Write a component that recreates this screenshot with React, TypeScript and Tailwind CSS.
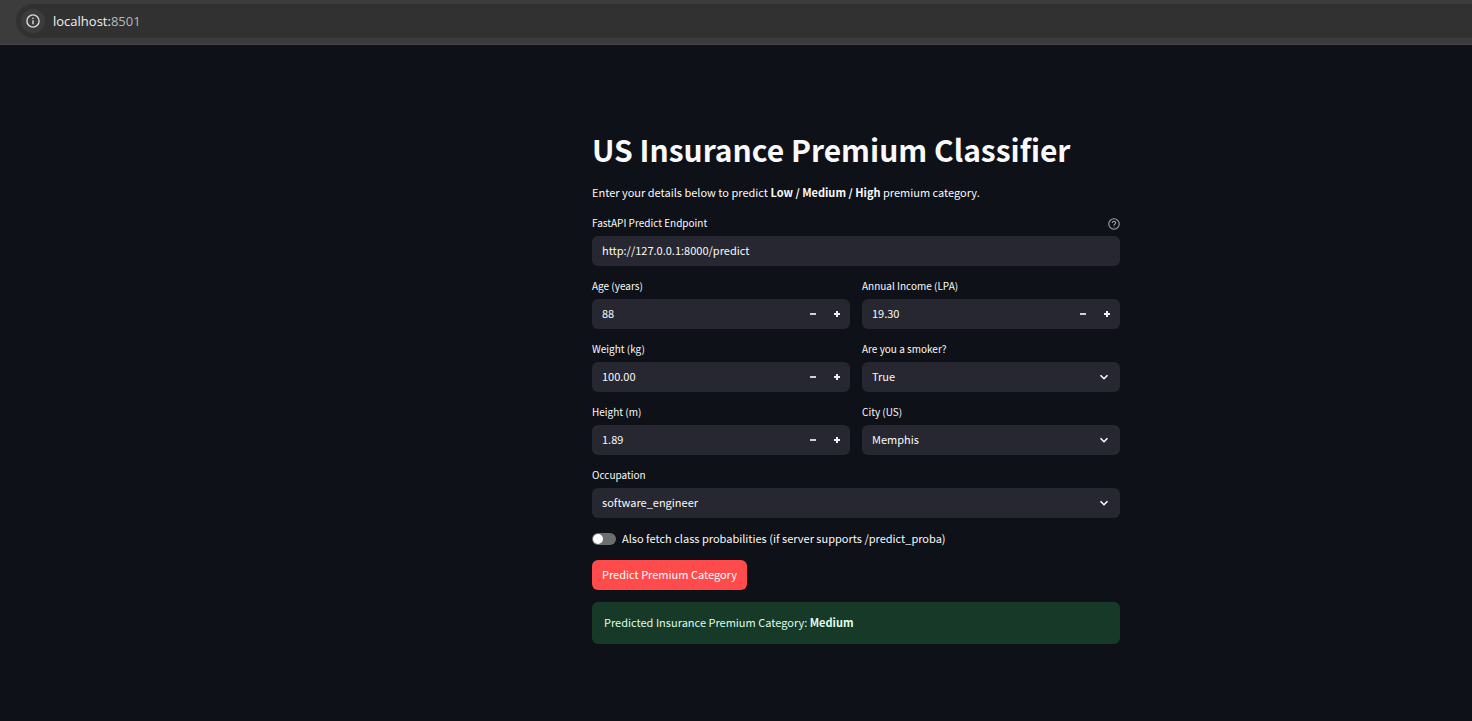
import { useState } from "react";
import type { ReactNode } from "react";

const fieldClass =
  "block h-[30px] w-full min-w-0 bg-transparent px-2.5 pb-0.5 text-[11px] leading-4 text-[#fafafa] outline-none";

function Field({
  id,
  label,
  help,
  children,
}: {
  id: string;
  label: string;
  help?: ReactNode;
  children: ReactNode;
}) {
  return (
    <div>
      <div className="flex h-[21px] items-start justify-between">
        <label htmlFor={id} className="text-[10px] leading-4 text-[#fafafa]">
          {label}
        </label>
        {help}
      </div>
      <div className="flex h-[30px] items-center overflow-hidden rounded-md bg-[#262730]">{children}</div>
    </div>
  );
}

function NumberField({ id, label, initial, step }: { id: string; label: string; initial: string; step: number }) {
  const [value, setValue] = useState(initial);
  const decimals = (initial.split(".")[1] ?? "").length;
  const change = (direction: number) => setValue((Number(value) + direction * step).toFixed(decimals));

  return (
    <Field id={id} label={label}>
      <input
        id={id}
        type="text"
        inputMode="decimal"
        value={value}
        onChange={(event) => setValue(event.target.value)}
        className={fieldClass}
      />
      <button
        type="button"
        aria-label={`Decrease ${label}`}
        onClick={() => change(-1)}
        className="flex h-[30px] w-6 shrink-0 items-center justify-center text-[#d2d2d4]"
      >
        <svg viewBox="0 0 12 12" className="size-3" fill="currentColor" shapeRendering="crispEdges" aria-hidden="true">
          <path d="M3 5h6v2H3z" />
        </svg>
      </button>
      <button
        type="button"
        aria-label={`Increase ${label}`}
        onClick={() => change(1)}
        className="mr-px flex h-[30px] w-6 shrink-0 items-center justify-center text-[#eeeeef]"
      >
        <svg viewBox="0 0 12 12" className="size-3" fill="currentColor" shapeRendering="crispEdges" aria-hidden="true">
          <path d="M5 3h2v2h2v2H7v2H5V7H3V5h2z" />
        </svg>
      </button>
    </Field>
  );
}

function SelectField({ id, label, options }: { id: string; label: string; options: string[] }) {
  return (
    <Field id={id} label={label}>
      <div className="relative w-full">
        <select id={id} className={`${fieldClass} appearance-none`}>
          {options.map((option) => (
            <option key={option} className="bg-[#262730]">
              {option}
            </option>
          ))}
        </select>
        <svg
          viewBox="0 0 12 12"
          className="pointer-events-none absolute top-[9px] right-2.5 size-3 text-[#fafafa]"
          fill="none"
          stroke="currentColor"
          strokeWidth="1.6"
          aria-hidden="true"
        >
          <path d="M2.5 4.2 6 7.7l3.5-3.5" />
        </svg>
      </div>
    </Field>
  );
}

function AddressBar() {
  return (
    <header className="h-[45px] border-b border-[#484848] bg-[#3c3c3c] pt-1 pl-4 font-['Open_Sans','Noto_Sans',sans-serif]">
      <div className="flex h-[34px] items-center rounded-l-full bg-[#313131] pl-[5px]">
        <button
          type="button"
          aria-label="View site information"
          className="flex size-6 items-center justify-center rounded-full bg-[#3c3c3c] text-[#dcdcdc]"
        >
          <svg viewBox="0 0 14 14" className="size-3.5" fill="none" stroke="currentColor" strokeWidth="1.4" aria-hidden="true">
            <circle cx="7" cy="7" r="6.1" />
            <path d="M7 6.3v3.9M7 3.7v1.4" />
          </svg>
        </button>
        <p className="ml-2 text-[13px] leading-5 text-[#f0f0f0]">
          localhost:<span className="text-[#b8b8b8]">8501</span>
        </p>
      </div>
    </header>
  );
}

export default function App() {
  return (
    <div className="min-h-screen bg-[#0e1117] text-[#fafafa]">
      <AddressBar />
      <main className="px-6 pt-[82px] pb-16 font-['Noto_Sans_CJK_SC',sans-serif] lg:pl-[264px]">
        <form className="mx-auto flex max-w-[528px] flex-col gap-3" onSubmit={(event) => event.preventDefault()}>
          <h1 className="py-1 text-[30px] leading-[36px] font-bold">US Insurance Premium Classifier</h1>
          <p className="pb-0.5 text-[11px] leading-[18px]">
            Enter your details below to predict <strong>Low / Medium / High</strong> premium category.
          </p>

          <Field
            id="endpoint"
            label="FastAPI Predict Endpoint"
            help={
              <button type="button" aria-label="Endpoint help" className="pt-[3px] text-[#a3a4a8]">
                <svg viewBox="0 0 24 24" className="size-3" fill="none" stroke="currentColor" strokeWidth="2.2" strokeLinecap="round" strokeLinejoin="round" aria-hidden="true">
                  <circle cx="12" cy="12" r="10.5" />
                  <path d="M8.6 9a3.5 3.5 0 0 1 6.8 1c0 2.2-3.4 2.6-3.4 4.2M12 18h.01" />
                </svg>
              </button>
            }
          >
            <input id="endpoint" type="text" defaultValue="http://127.0.0.1:8000/predict" className={fieldClass} />
          </Field>

          <div className="grid gap-3 sm:grid-cols-2">
            <NumberField id="age" label="Age (years)" initial="88" step={1} />
            <NumberField id="income" label="Annual Income (LPA)" initial="19.30" step={0.1} />
            <NumberField id="weight" label="Weight (kg)" initial="100.00" step={0.5} />
            <SelectField id="smoker" label="Are you a smoker?" options={["True", "False"]} />
            <NumberField id="height" label="Height (m)" initial="1.89" step={0.01} />
            <SelectField id="city" label="City (US)" options={["Memphis"]} />
          </div>

          <SelectField id="occupation" label="Occupation" options={["software_engineer"]} />

          <label className="flex h-[18px] w-fit items-center gap-1.5 text-[11px] leading-4">
            <input type="checkbox" role="switch" className="peer sr-only" />
            <span className="flex h-3 w-6 rounded-full bg-[#6d6e72] p-px peer-checked:justify-end peer-checked:bg-[#ff4b4b]">
              <span className="size-2.5 rounded-full bg-white" />
            </span>
            <span className="pb-0.5">Also fetch class probabilities (if server supports /predict_proba)</span>
          </label>

          <button
            type="submit"
            className="h-[30px] w-fit rounded-md bg-[#ff4b4b] px-2.5 pb-0.5 text-[11px] leading-4 text-white"
          >
            Predict Premium Category
          </button>

          <div role="status" className="rounded-md bg-[#173928] px-3 pt-3 pb-3.5 text-[11px] leading-4 text-[#dffde9]">
            Predicted Insurance Premium Category: <strong>Medium</strong>
          </div>
        </form>
      </main>
    </div>
  );
}
